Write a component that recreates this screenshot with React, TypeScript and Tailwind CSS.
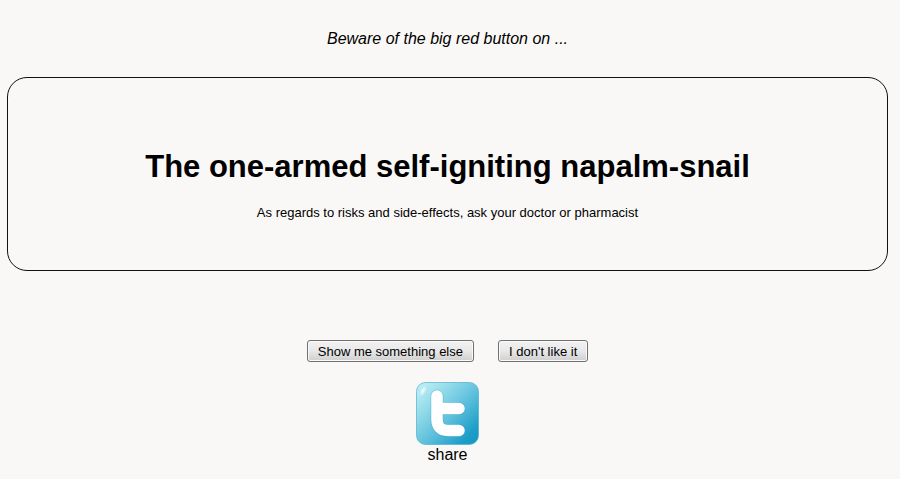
interface ActionButtonProps {
  label: string
}

function ActionButton({ label }: ActionButtonProps) {
  return (
    <button
      type="button"
      className="h-[22px] rounded-[3px] border border-[#707070] bg-linear-to-b from-[#f2f2f2] from-0% via-[#e8e8e8] via-50% to-[#cfcfcf] px-[10px] pt-px text-[13px] leading-5 text-black shadow-[inset_0_0_0_1px_#fafafa]"
    >
      {label}
    </button>
  )
}

function TwitterBadge() {
  return (
    <svg viewBox="0 0 63 63" className="size-[63px]" aria-hidden="true">
      <defs>
        <linearGradient id="tile" x1="0" y1="0" x2="1" y2="1">
          <stop offset="0" stopColor="#c4f1f8" />
          <stop offset="0.25" stopColor="#9adeec" />
          <stop offset="0.55" stopColor="#5fc0dc" />
          <stop offset="0.85" stopColor="#1c9ec8" />
          <stop offset="1" stopColor="#1596c0" />
        </linearGradient>
        <radialGradient id="shine">
          <stop offset="0" stopColor="#fff" stopOpacity="0.9" />
          <stop offset="1" stopColor="#fff" stopOpacity="0" />
        </radialGradient>
      </defs>
      <rect x="0.5" y="0.5" width="62" height="62" rx="9" fill="url(#tile)" stroke="#4fb0cb" strokeOpacity="0.7" />
      <ellipse cx="7" cy="9" rx="3" ry="6" fill="url(#shine)" transform="rotate(30 7 9)" />
      {/* Soft outline under the white strokes of the "t" */}
      <g fill="none" strokeLinecap="round" strokeLinejoin="round">
        <path d="M21 14V37Q21 48.500 32 48.500H43M21 26.500H43" stroke="#2f9fc0" strokeOpacity="0.35" strokeWidth="13" />
        <path d="M21 14V37Q21 48.500 32 48.500H43M21 26.500H43" stroke="#fff" strokeWidth="11.500" />
      </g>
    </svg>
  )
}

export default function App() {
  return (
    <main className="flex min-h-screen flex-col items-center bg-[#faf8f6] pt-[29px] pr-3 pb-3 pl-[7px] text-center font-['Liberation_Sans',Arial,sans-serif] text-base leading-5 text-black">
      <p className="italic">Beware of the big red button on ...</p>

      <section className="mt-7 w-full rounded-[20px] border border-[#111] px-4 pt-[71px] pb-[47px]">
        <h1 className="text-[31px] leading-9 font-bold">The one-armed self-igniting napalm-snail</h1>
        <p className="mt-[18px] text-[13px] leading-5">
          As regards to risks and side-effects, ask your doctor or pharmacist
        </p>
      </section>

      <div className="mt-[69px] flex flex-wrap justify-center gap-6">
        <ActionButton label="Show me something else" />
        <ActionButton label="I don't like it" />
      </div>

      <a href="#share" className="mt-5 flex flex-col items-center">
        <TwitterBadge />
        <span className="leading-5">share</span>
      </a>
    </main>
  )
}
